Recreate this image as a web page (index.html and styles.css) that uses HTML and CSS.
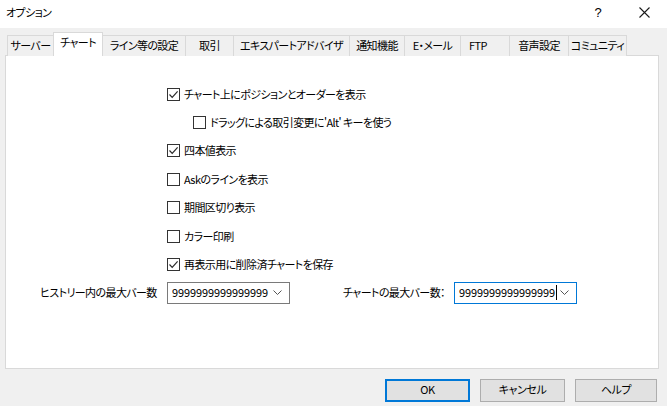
FILE: index.html
```html
<!DOCTYPE html>
<html lang="ja">
<head>
<meta charset="utf-8">
<title>オプション</title>
<link rel="stylesheet" href="styles.css">
</head>
<body>
<div class="window">
  <div class="titlebar">
    <span class="title">オプション</span>
    <span class="tb-btn help">?</span>
    <span class="tb-btn close">
      <svg width="11" height="11" viewBox="0 0 11 11"><path d="M0.5 0.5 L10.5 10.5 M10.5 0.5 L0.5 10.5" stroke="#1a1a1a" stroke-width="1.1" fill="none"/></svg>
    </span>
  </div>
  <div class="body">
    <div class="tabs">
      <div class="tab t1">サーバー</div>
      <div class="tab t2 active">チャート</div>
      <div class="tab t3">ライン等の設定</div>
      <div class="tab t4">取引</div>
      <div class="tab t5">エキスパートアドバイザ</div>
      <div class="tab t6">通知機能</div>
      <div class="tab t7">E・メール</div>
      <div class="tab t8">FTP</div>
      <div class="tab t9">音声設定</div>
      <div class="tab t10">コミュニティ</div>
    </div>
    <div class="panel">
      <div class="options">
        <label class="row"><span class="box checked"><svg width="11" height="11" viewBox="0 0 11 11"><path d="M1.5 5.5 L4.2 8.3 L9.6 2.4" stroke="#2b2b2b" stroke-width="1.2" fill="none"/></svg></span><span>チャート上にポジションとオーダーを表示</span></label>
        <label class="row sub"><span class="box"></span><span>ドラッグによる取引変更に'Alt' キーを使う</span></label>
        <label class="row"><span class="box checked"><svg width="11" height="11" viewBox="0 0 11 11"><path d="M1.5 5.5 L4.2 8.3 L9.6 2.4" stroke="#2b2b2b" stroke-width="1.2" fill="none"/></svg></span><span>四本値表示</span></label>
        <label class="row"><span class="box"></span><span>Askのラインを表示</span></label>
        <label class="row"><span class="box"></span><span>期間区切り表示</span></label>
        <label class="row"><span class="box"></span><span>カラー印刷</span></label>
        <label class="row"><span class="box checked"><svg width="11" height="11" viewBox="0 0 11 11"><path d="M1.5 5.5 L4.2 8.3 L9.6 2.4" stroke="#2b2b2b" stroke-width="1.2" fill="none"/></svg></span><span>再表示用に削除済チャートを保存</span></label>
      </div>
      <div class="combos">
        <span class="clabel first">ヒストリー内の最大バー数</span>
        <div class="combo"><span class="cval">9999999999999999</span><svg class="chev" width="9" height="5" viewBox="0 0 9 5"><path d="M0.5 0.5 L4.5 4.5 L8.5 0.5" stroke="#555" stroke-width="1" fill="none"/></svg></div>
        <span class="clabel second">チャートの最大バー数：</span>
        <div class="combo focused"><span class="cval">9999999999999999</span><span class="caret"></span><svg class="chev" width="9" height="5" viewBox="0 0 9 5"><path d="M0.5 0.5 L4.5 4.5 L8.5 0.5" stroke="#555" stroke-width="1" fill="none"/></svg></div>
      </div>
    </div>
    <div class="buttons">
      <button class="btn default">OK</button>
      <button class="btn">キャンセル</button>
      <button class="btn narrow">ヘルプ</button>
    </div>
  </div>
</div>
</body>
</html>
```

FILE: styles.css
```css
* { box-sizing: border-box; }
html, body { margin: 0; padding: 0; }
body {
  width: 667px;
  height: 406px;
  overflow: hidden;
  background: #f0f0f0;
  font-family: "Noto Sans CJK JP", "Noto Sans", sans-serif;
  font-size: 11px;
  letter-spacing: -0.6px;
  font-feature-settings: "palt";
  color: #000;
}
.window { width: 667px; height: 406px; display: flex; flex-direction: column; }
.titlebar {
  height: 28px;
  background: #fff;
  display: flex;
  align-items: center;
  flex: none;
}
.title { padding-left: 6px; flex: 1; line-height: 1; margin-top: -3px; }
.tb-btn {
  width: 46px;
  height: 28px;
  display: flex;
  align-items: center;
  justify-content: center;
  margin-top: -4px;
}
.help { font-family: "Liberation Sans", sans-serif; font-size: 13px; letter-spacing: 0; }
.body { padding: 0 9px 0 5px; flex: 1; display: flex; flex-direction: column; }
.tabs {
  display: flex;
  align-items: flex-end;
  height: 27px;
  padding-left: 2px;
  position: relative;
  z-index: 1;
}
.tab {
  height: 21px;
  margin-bottom: -1px;
  border: 1px solid #d9d9d9;
  border-bottom: none;
  border-left: none;
  background: #f0f0f0;
  display: flex;
  align-items: center;
  justify-content: center;
  line-height: 1;
  padding-bottom: 1px;
  white-space: nowrap;
}
.t1 { width: 47px; border-left: 1px solid #d9d9d9; }
.t2 { width: 50px; }
.t3 { width: 83px; }
.t4 { width: 48px; }
.t5 { width: 116px; }
.t6 { width: 55px; }
.t7 { width: 56px; }
.t8 { width: 49px; justify-content: flex-start; padding-left: 8px; }
.t9 { width: 59px; }
.t10 { width: 58px; }
.tab.active {
  height: 24px;
  background: #fff;
  border-left: 1px solid #d9d9d9;
  border-right: 1px solid #d9d9d9;
  margin-left: -1px;
  margin-bottom: -1px;
  padding-bottom: 4px;
}
.panel {
  width: 654px;
  height: 314px;
  background: #fff;
  border: 1px solid #d9d9d9;
  display: flex;
  flex-direction: column;
}
.options {
  display: flex;
  flex-direction: column;
  padding-left: 161px;
  padding-top: 24px;
}
.row {
  height: 28.4px;
  display: flex;
  align-items: center;
  gap: 4px;
  line-height: 1;
}
.row.sub { padding-left: 26px; }
.box {
  width: 13px;
  height: 13px;
  border: 1px solid #333;
  background: #fff;
  flex: none;
  display: flex;
  align-items: center;
  justify-content: center;
}
.combos {
  display: grid;
  grid-template-columns: 161px 123px 164px 123px;
  align-items: center;
  margin-top: 3px;
}
.clabel { line-height: 1; white-space: nowrap; }
.clabel.first { padding-left: 34px; }
.clabel.second { padding-left: 53px; }
.combo {
  height: 22px;
  border: 1px solid #7a7a7a;
  background: #fff;
  display: flex;
  align-items: center;
  padding-left: 4px;
  padding-right: 4px;
}
.combo.focused { border-color: #0078d7; }
.cval { line-height: 1; letter-spacing: -0.1px; font-size: 11px; }
.caret { width: 1px; height: 15px; background: #000; margin-left: 1px; }
.chev { margin-left: auto; margin-right: 3px; flex: none; }
.buttons {
  display: flex;
  justify-content: flex-end;
  gap: 10px;
  margin-top: 10px;
  margin-right: -9px;
  padding-right: 10px;
}
.btn {
  width: 85px;
  height: 23px;
  background: #e1e1e1;
  border: 1px solid #adadad;
  font-family: "Noto Sans CJK JP", "Noto Sans", sans-serif;
  font-size: 11px;
  letter-spacing: -0.4px;
  font-feature-settings: "palt";
  color: #000;
  padding: 0 0 2px;
  line-height: 1;
}
.btn.default { border: 2px solid #0078d7; }
.btn.narrow { width: 82px; }
```
